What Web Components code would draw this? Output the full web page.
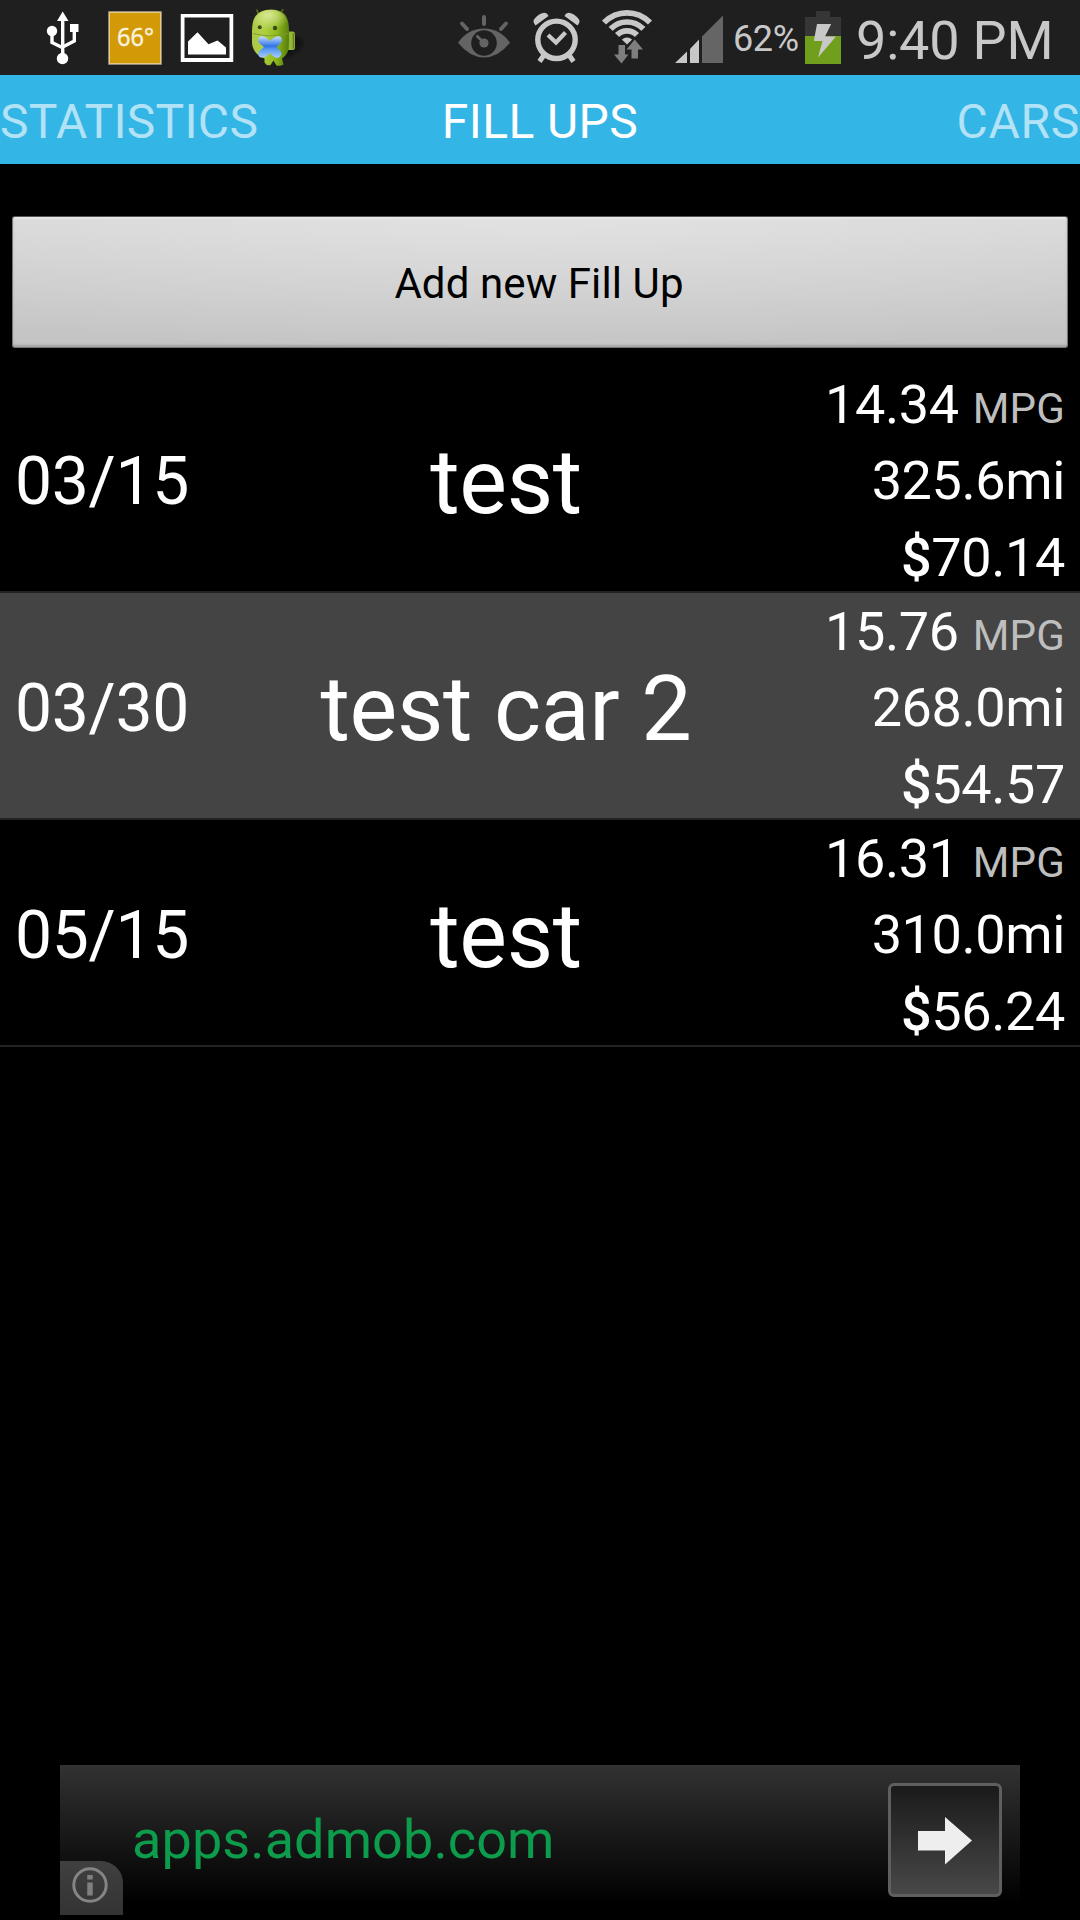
<!DOCTYPE html>
<html lang="en">
<head>
<meta charset="utf-8">
<title>Fill Ups</title>
<style>
html, body { margin: 0; background: #000; }
body { width: 1080px; height: 1920px; overflow: hidden; font-family: Roboto, "Liberation Sans", sans-serif; }
</style>
</head>
<body>
<fuel-app></fuel-app>
<script>
const define = (name, html, setup) => {
  const template = document.createElement('template');
  template.innerHTML = html;
  customElements.define(name, class extends HTMLElement {
    connectedCallback() {
      if (this.shadowRoot) return;
      this.attachShadow({ mode: 'open' }).append(template.content.cloneNode(true));
      if (setup) setup(this, this.shadowRoot);
    }
  });
};

/* Each icon: [left, top, width, height, markup], drawn in status bar coordinates. */
const ICONS = {
  usb: [46, 10, 34, 56, `<g fill="#fff"><path d="M62.7 11.5 68.5 21H57z"/><circle cx="52" cy="31" r="5.2"/><path d="M70 24h8.5v8H70z"/><circle cx="62.5" cy="58.5" r="5.7"/></g><path d="M62.7 19v36M52 33v9.5l10.7 5.2M74.3 30v11L62.7 47" fill="none" stroke="#fff" stroke-width="3.4"/>`],
  weather: [108, 11, 54, 54, `<path d="M108.5 11.5h53v53h-53z" fill="#d29a06" stroke="#8d8778"/><path d="M109.5 12.5h51v51h-51z" fill="none" stroke="#e7c98b"/><text x="117" y="45.5" font-size="25" textLength="37" lengthAdjust="spacingAndGlyphs" fill="#fbf1dc" stroke="#fbf1dc" stroke-width=".5">66°</text>`],
  picture: [180, 13, 54, 50, `<path d="M180.5 14h53v48h-53z" fill="#8a8a8a"/><path d="M181 14h52v48h-52z" fill="#fff"/><path d="M184.5 17.5h45v40.5h-45z" fill="#1f1f1f"/><path d="M188 54.5V41.5L197.5 32.3 208.5 44.2 217.5 40.5 226 47.5v7z" fill="#fff"/>`],
  droid: [250, 7, 56, 60, `<defs><linearGradient id="g" x1="0" x2="1" y1="0" y2=".1"><stop offset="0" stop-color="#a9c548"/><stop offset=".35" stop-color="#b0d044"/><stop offset=".7" stop-color="#8fba1e"/><stop offset="1" stop-color="#5f850e"/></linearGradient><radialGradient id="h" cx=".45" cy=".2" r=".6"><stop offset="0" stop-color="#dcea9c" stop-opacity=".9"/><stop offset="1" stop-color="#dcea9c" stop-opacity="0"/></radialGradient><linearGradient id="b" x1="0" x2="0" y1="0" y2="1"><stop offset="0" stop-color="#c4dcff"/><stop offset=".45" stop-color="#2f74e6"/><stop offset=".6" stop-color="#5a9af4"/><stop offset="1" stop-color="#a9cdff"/></linearGradient><filter id="s"><feGaussianBlur stdDeviation="1.6"/></filter></defs>
    <path d="M286 34Q304 38 303 44Q300 52 284 58z" fill="#080808" opacity=".65" filter="url(#s)"/>
    <path d="M258.500 14 256.500 9.500M281 13 283 9" stroke="#5c7020" stroke-width="1.600"/>
    <rect x="286" y="31.500" width="9" height="18.500" rx="2.500" fill="#94b73a"/><path d="M293.500 33v15.500" stroke="#647f1c" stroke-width="1.600"/>
    <path d="M252 31Q252 21 255.500 16Q260 9.500 271 9.500Q282.500 9.500 286.500 17Q289 22 289 31V45Q289 54 282 58.500L283.500 64.500Q280 66.500 276.500 65.500L273.500 60.500 270.500 65Q266.500 66 264.500 62.500V58.500Q253 54 252 43z" fill="url(#g)"/>
    <path d="M253 31Q253 10 271 10Q288 10 288.500 33Q270 37 253 33z" fill="url(#h)"/>
    <path d="M253 33.500Q270 38 288 33.500" fill="none" stroke="#7f9b2c" stroke-width=".9"/>
    <circle cx="259.700" cy="27.300" r="2" fill="#3c4a14"/><circle cx="275" cy="28" r="2.200" fill="#3c4a14"/>
    <path d="M260 36.500Q265 35.500 270 41Q275 35.500 280 36.500Q282.500 38 281.500 42.500L276.500 47 281.500 52.500Q281.500 57.500 276.500 58Q272 56.500 270 53Q266 58 260.500 57.500Q257 55.500 259 51.500L264 47 258.500 42.500Q257.500 38 260 36.500z" fill="url(#b)"/>`],
  eye: [457, 14, 54, 46, `<path d="M458 42.800Q468 28.500 484 28.500T510 42.800Q498 57.500 484 57.500T458 42.800z" fill="#646464"/><circle cx="484" cy="43" r="12.800" fill="#1f1f1f"/><circle cx="484" cy="43" r="4.600" fill="#646464"/><path d="M484 43 476.500 35.500" stroke="#646464" stroke-width="2.600"/><path d="M484 17v7M462 23.500l5 5.500M506 23.500l-5 5.500" fill="none" stroke="#646464" stroke-width="4" stroke-linecap="round"/>`],
  alarm: [532, 12, 50, 52, `<g fill="none" stroke="#c8c8c8"><circle cx="556.500" cy="39.800" r="18.700" stroke-width="5.400"/><path d="M548 35l8 7.500 9.500-10" stroke-width="4.200"/><path d="M544 55l-4.500 6.500M569 55l4.500 6.500" stroke-width="5"/></g><path d="M535.500 25.500Q532.500 22 534 19.500Q538.500 13.500 544 12.800Q547 12.800 548.500 16zM577.500 25.500Q580.500 22 579 19.500Q574.500 13.500 569 12.800Q566 12.800 564.500 16z" fill="#c8c8c8"/>`],
  wifi: [600, 9, 54, 56, `<clipPath id="w"><path d="M627 44.500 595.500 14.500V0h63v14.500z"/></clipPath><g clip-path="url(#w)" fill="none" stroke="#c8c8c8" stroke-width="5.700"><circle cx="627" cy="44.500" r="31.700"/><circle cx="627" cy="44.500" r="22.500"/><circle cx="627" cy="44.500" r="13.700"/><circle cx="627" cy="44.500" r="7" fill="#c8c8c8" stroke="none"/></g><path d="M618.500 45h6.500v9.500h3.500L621.500 63.500 614 54.500h4.500z" fill="#7e7e7e"/><path d="M631.500 58.500V49.500H626.500L634.700 39.500 643 49.500H638v9z" fill="#7e7e7e" stroke="#1f1f1f" stroke-width="1" paint-order="stroke"/>`],
  signal: [674, 14, 50, 50, `<path d="M675 63 687 51.500V63zM690 49 699 39.500V63H690z" fill="#c8c8c8"/><path d="M702 36.500 723 15.500V63H702z" fill="#656565"/>`],
  battery: [804, 10, 38, 55, `<path d="M816 11h14v6h11v19h-36V17h11z" fill="#363636"/><path d="M805 36h36v28h-36z" fill="#6f9f1b"/><path d="M817 24h14.200l-6.200 12.500h11L818 57.500l4.500-16.500h-8.700z" fill="#c8c8c8"/>`]
};

define('status-icon', `<style>:host{display:block;flex:none}svg{display:block}</style>`, (host, root) => {
  const [x, y, w, h, body] = ICONS[host.getAttribute('name')];
  root.innerHTML += `<svg width="${w}" height="${h}" viewBox="${x} ${y} ${w} ${h}" font-family="'Open Sans'">${body}</svg>`;
  host.style.marginTop = y + 'px';
});

define('status-bar', `<style>
:host{display:flex;align-items:flex-start;height:75px;box-sizing:border-box;padding-left:46px;background:#1f1f1f;color:#c8c8c8;white-space:nowrap}
.w{margin-left:28px}.p{margin-left:18px}.d{margin-left:16px}.e{margin-left:151px}.a{margin-left:21px}.f{margin-left:18px}.s{margin-left:20px}
.pct{width:71px;margin-left:9px;font-size:36px;line-height:78px;letter-spacing:-.4px}
.clock{margin-left:14px;font-size:54px;line-height:81px;letter-spacing:-.2px}
</style>
<status-icon name="usb"></status-icon><status-icon class="w" name="weather"></status-icon><status-icon class="p" name="picture"></status-icon><status-icon class="d" name="droid"></status-icon>
<status-icon class="e" name="eye"></status-icon><status-icon class="a" name="alarm"></status-icon><status-icon class="f" name="wifi"></status-icon><status-icon class="s" name="signal"></status-icon>
<span class="pct">62%</span><status-icon name="battery"></status-icon><span class="clock">9:40 PM</span>`);

define('tab-strip', `<style>
:host{display:grid;grid-template-columns:1fr auto 1fr;height:89px;background:#33b5e5;color:#b2e2f5;font-size:48px;line-height:93px;letter-spacing:.3px;white-space:nowrap}
b{font-weight:400;color:#fff;letter-spacing:.4px}
span:last-child{text-align:right;letter-spacing:.7px}
</style><span>STATISTICS</span><b>FILL UPS</b><span>CARS</span>`);

define('holo-button', `<style>
:host{display:block;padding:52px 12px 0}
button{display:block;width:100%;height:132px;box-sizing:border-box;margin:0;padding:3px 2px 0 0;border:1px solid #777;border-top-color:#555;border-radius:3px;font:42px/1 Roboto,sans-serif;letter-spacing:.1px;color:#000;
background:radial-gradient(ellipse 75% 110% at 50% 0,#fff4 0,#fff0 100%),linear-gradient(#d8d8d8,#c3c3c3);box-shadow:inset 0 2px 1px #eee8,inset 0 -2px 2px #8888}
</style><button><slot></slot></button>`);

define('fill-up', `<style>
:host{display:grid;grid-template-columns:230px 1fr 300px;height:225px;padding:0 15px;border-bottom:2px solid #232323;color:#fff;white-space:nowrap}
:host([selected]){background:#444}
.date{font-size:66px;line-height:231px;letter-spacing:-.3px}
.car{justify-self:center;padding-left:2px;font-size:90px;line-height:234px;letter-spacing:-.4px}
.stats{display:flex;flex-direction:column;box-sizing:border-box;padding-top:1px;font-size:54px;line-height:76.400px;letter-spacing:-.4px;text-align:right;height:225px}
small{font-size:42px;line-height:1;letter-spacing:.2px;margin-left:1px;color:#bebebe}
.stats div{flex:none;height:76.400px}
.cur{font-weight:500}
</style><div class="date"></div><div class="car"></div><div class="stats"><div><span class="mpg"></span> <small>MPG</small></div><div class="mi"></div><div><span class="cur">$</span><span class="cost"></span></div></div>`, (host, root) => {
  for (const key of ['date', 'car', 'mpg', 'mi', 'cost']) root.querySelector('.' + key).textContent = host.getAttribute(key);
});

define('ad-banner', `<style>
:host{display:flex;justify-content:space-between;width:960px;height:150px;margin:0 auto 5px;position:relative;background:linear-gradient(#323232,#000 92%)}
.link{margin-left:72px;font-size:54px;line-height:149px;letter-spacing:.1px;color:#0c9c4b}
.go{width:108px;height:108px;margin:18px 18px 0 0;border:3px solid #5f5f5f;border-radius:6px;background:linear-gradient(#1a1a1a,#484848)}
.info{position:absolute;left:0;bottom:0;width:63px;height:54px;border-radius:0 22px 0 0;background:linear-gradient(#404040,#333)}
svg{display:block}
</style><span class="link">apps.admob.com</span>
<div class="go"><svg width="108" height="108" viewBox="891 1786 108 108"><path d="M918 1831h27v-14l27 23.500-27 24v-14h-27z" fill="#eee"/></svg></div>
<div class="info"><svg width="61" height="54" viewBox="60 1861 61 54"><circle cx="90" cy="1885" r="16.200" fill="none" stroke="#858585" stroke-width="3"/><path d="M90 1875v4.500M90 1882.500v13" stroke="#808080" stroke-width="5.500"/></svg></div>`);

define('fuel-app', `<style>
:host{display:flex;flex-direction:column;width:1080px;height:1920px;overflow:hidden;background:#000}
main{flex:1}
.list{margin-top:18px}
</style><status-bar></status-bar><tab-strip></tab-strip>
<main><holo-button>Add new Fill Up</holo-button>
<div class="list">
<fill-up date="03/15" car="test" mpg="14.34" mi="325.6mi" cost="70.14"></fill-up>
<fill-up selected date="03/30" car="test car 2" mpg="15.76" mi="268.0mi" cost="54.57"></fill-up>
<fill-up date="05/15" car="test" mpg="16.31" mi="310.0mi" cost="56.24"></fill-up>
</div></main><ad-banner></ad-banner>`);
</script>
</body>
</html>
